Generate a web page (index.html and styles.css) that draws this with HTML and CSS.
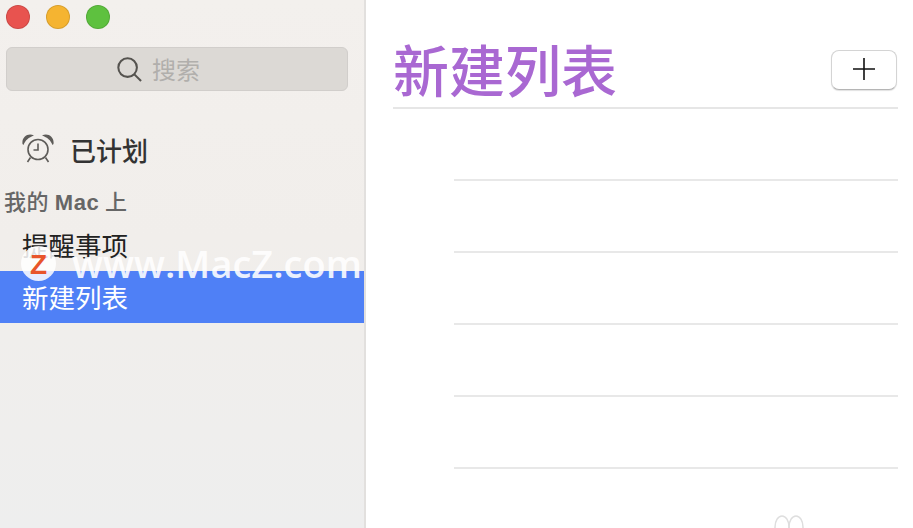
FILE: index.html
```html
<!DOCTYPE html>
<html lang="zh">
<head>
<meta charset="utf-8">
<title>新建列表</title>
<link rel="stylesheet" href="styles.css">
</head>
<body>
<div class="window">
  <aside class="sidebar">
    <div class="lights">
      <span class="light red"></span>
      <span class="light yellow"></span>
      <span class="light green"></span>
    </div>
    <div class="search">
      <svg class="search-icon" width="26" height="26" viewBox="0 0 28 28" fill="none" stroke="#55534f" stroke-width="2.200">
        <circle cx="12.5" cy="12.5" r="10"/>
        <path d="M19.5 19.5L27 27"/>
      </svg>
      <span>搜索</span>
    </div>
    <div class="scheduled">
      <svg class="clock" width="32" height="30" viewBox="0 0 32 30" fill="none" stroke="#5e5c59" stroke-width="1.6">
        <path d="M.5 10C-.5 3 6-1.500 12 1.500 6.500 3.500 3.500 6 1.500 11Z" fill="#5e5c59" stroke="none"/>
        <path d="M31.500 10C32.500 3 26-1.500 20 1.500 25.500 3.500 28.500 6 30.500 11Z" fill="#5e5c59" stroke="none"/>
        <circle cx="16" cy="15.500" r="10"/>
        <path d="M16 9.500V16H11.500M8.500 23.500L5.500 28M23.500 23.500L26.500 28"/>
      </svg>
      <span>已计划</span>
    </div>
    <div class="group-title">我的 <span class="group-latin">Mac</span> 上</div>
    <div class="list-item">提醒事项</div>
    <div class="list-item selected">新建列表</div>
  </aside>
  <main class="content">
    <header class="header">
      <h1>新建列表</h1>
      <button class="add" type="button" aria-label="添加">
        <svg width="24" height="24" viewBox="0 0 24 24" stroke="#111" stroke-width="1.600">
          <path d="M12 1V23M1 12H23"/>
        </svg>
      </button>
    </header>
    <div class="rows">
      <div class="row"></div>
      <div class="row"></div>
      <div class="row"></div>
      <div class="row"></div>
      <div class="row"></div>
    </div>
    <svg class="empty-mark" width="32" height="14" viewBox="0 0 32 14" fill="none" stroke="#dedede" stroke-width="1.500">
      <ellipse cx="9" cy="13" rx="7" ry="11"/>
      <ellipse cx="23" cy="13" rx="7" ry="11"/>
    </svg>
  </main>
</div>
<div class="watermark">
  <span class="wm-logo">Z</span>
  <span class="wm-text">www.MacZ.com</span>
</div>
</body>
</html>
```
FILE: styles.css
```css
* {
  box-sizing: border-box;
}

html,
body {
  margin: 0;
  height: 100%;
  overflow: hidden;
}

body {
  position: relative;
  background: #fff;
  font-family: "Noto Sans CJK SC", "Liberation Sans", sans-serif;
}

.window {
  display: flex;
  width: 913px;
  height: 528px;
}

.sidebar {
  flex: 0 0 366px;
  padding-top: 5px;
  background: linear-gradient(#f3f0ed, #f1eeeb 45%, #eeeeee);
  border-right: 2px solid #e2e0de;
}

.lights {
  display: flex;
  gap: 16px;
  padding-left: 6px;
}

.light {
  width: 24px;
  height: 24px;
  border-radius: 50%;
  border: 1px solid rgba(0, 0, 0, 0.12);
}

.red {
  background: #e8534f;
}

.yellow {
  background: #f5b431;
}

.green {
  background: #5ec13f;
}

.search {
  display: flex;
  align-items: center;
  justify-content: center;
  gap: 10px;
  height: 44px;
  margin: 18px 16px 0 6px;
  padding-right: 38px;
  background: #dcd9d5;
  border: 1px solid #d1cecb;
  border-radius: 6px;
  color: #b1afac;
  font-size: 24px;
}

.search span {
  line-height: 44px;
}

.scheduled {
  display: flex;
  align-items: center;
  gap: 16px;
  height: 34px;
  margin-top: 41px;
  padding-left: 22px;
  color: #333;
  font-size: 26px;
  font-weight: 500;
}

.clock {
  flex: none;
}

.group-title {
  height: 30px;
  margin: 19px 0 11px;
  padding-left: 4px;
  color: #666;
  font-size: 22px;
  font-weight: 500;
  letter-spacing: 0.6px;
  line-height: 30px;
}

.group-latin {
  font-family: "Liberation Sans", sans-serif;
  font-weight: 700;
}

.list-item {
  height: 45px;
  padding-left: 22px;
  color: #222;
  font-size: 26.500px;
  line-height: 38px;
}

.list-item.selected {
  height: 52px;
  padding-top: 7px;
  background: #4f80f6;
  color: #fff;
}

.content {
  position: relative;
  flex: 1;
  padding: 0 15px 0 27px;
}

.header {
  display: flex;
  align-items: flex-start;
  justify-content: space-between;
  height: 109px;
  border-bottom: 2px solid #e6e6e6;
}

.header h1 {
  margin: 28px 0 0;
  color: #a968d2;
  font-size: 56px;
  font-weight: 500;
  line-height: 80px;
}

.add {
  display: flex;
  align-items: center;
  justify-content: center;
  width: 66px;
  height: 40px;
  margin: 50px 1px 0 0;
  padding: 0 0 2px;
  background: #fff;
  border: 1px solid #d4d4d4;
  border-bottom-color: #b5b5b5;
  border-radius: 8px;
  box-shadow: 0 1px 1px rgba(0, 0, 0, 0.12);
}

.rows {
  margin-left: 61px;
}

.row {
  height: 72px;
  border-bottom: 2px solid #e8e8e8;
}

.empty-mark {
  position: absolute;
  left: 407px;
  top: 514px;
}

.watermark {
  position: absolute;
  left: 21px;
  top: 243px;
  display: flex;
  align-items: center;
  gap: 16px;
  color: rgba(255, 255, 255, 0.88);
}

.wm-logo {
  width: 35px;
  height: 35px;
  border-radius: 50%;
  background: rgba(255, 255, 255, 0.85);
  color: #e8552a;
  font-family: "Liberation Sans", sans-serif;
  font-size: 28px;
  font-weight: 700;
  line-height: 37px;
  text-align: center;
}

.wm-text {
  margin-top: -1px;
  font-family: "Open Sans", sans-serif;
  font-size: 38px;
  font-weight: 600;
  line-height: 42px;
}
```
